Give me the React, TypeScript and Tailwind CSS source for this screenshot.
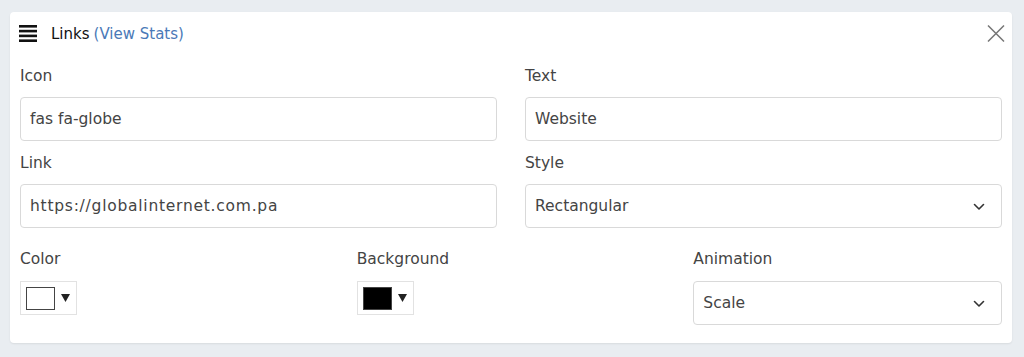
import React from "react";

const font = { fontFamily: '"DejaVu Sans", "Noto Sans", sans-serif' };

function Chevron() {
  return (
    <svg width="12" height="8" viewBox="0 0 12 8" fill="none" className="shrink-0">
      <path d="M1.5 1.5 L6 6 L10.5 1.5" stroke="#333" strokeWidth="1.6" strokeLinecap="round" strokeLinejoin="round" />
    </svg>
  );
}

function Field({ label, value, select, wide }: { label: string; value: string; select?: boolean; wide?: boolean }) {
  return (
    <div className="flex flex-col">
      <label className="text-[15.5px] leading-[22px] text-[#444] mb-[10px]">{label}</label>
      <div className="h-[44px] rounded-[4px] border border-[#d9d9d9] bg-white flex items-center justify-between pl-[9px] pr-[16px] pt-[2px] text-[15.5px] text-[#444]">
        <span className={wide ? "tracking-[0.75px]" : ""}>{value}</span>
        {select && <Chevron />}
      </div>
    </div>
  );
}

function Swatch({ label, color }: { label: string; color: string }) {
  return (
    <div className="flex flex-col">
      <label className="text-[15.5px] leading-[22px] text-[#444] mb-[11px]">{label}</label>
      <div className="w-[57px] h-[34px] border border-[#e2e2e2] bg-white flex items-center pl-[5px] gap-[6px]">
        <div className="w-[29px] h-[23px] border border-[#444]" style={{ background: color }} />
        <svg width="9" height="9" viewBox="0 0 9 9" className="mb-[2px]"><path d="M0 1 L9 1 L4.5 9 Z" fill="#222" /></svg>
      </div>
    </div>
  );
}

export default function App() {
  return (
    <div className="w-[1024px] h-[357px] bg-[#e9edf1] pt-[12px] pl-[10px]" style={font}>
      <div className="w-[1002px] h-[331px] bg-white rounded-[4px] shadow-[0_1px_2px_rgba(0,0,0,0.08)] px-[10px]">
        <div className="h-[43px] flex items-center justify-between">
          <div className="flex items-center">
            <svg width="18" height="17" viewBox="0 0 18 17" className="ml-[-1px] mr-[14px]">
              <rect x="0" y="0" width="18" height="2.6" fill="#111" />
              <rect x="0" y="4.8" width="18" height="2.6" fill="#111" />
              <rect x="0" y="9.6" width="18" height="2.6" fill="#111" />
              <rect x="0" y="14.4" width="18" height="2.6" fill="#111" />
            </svg>
            <span className="text-[15px] text-[#111] mt-[1px]">Links</span>
            <span className="text-[15px] text-[#4a79b7] ml-[4px] mt-[1px]">(View Stats)</span>
          </div>
          <svg width="18" height="17" viewBox="0 0 18 17" className="mr-[-3px]">
            <path d="M1 0.5 L17 16.5 M17 0.5 L1 16.5" stroke="#777" strokeWidth="1.5" />
          </svg>
        </div>
        <div className="grid grid-cols-2 gap-x-[28px] gap-y-[11px] mt-[10px]">
          <Field label="Icon" value="fas fa-globe" />
          <Field label="Text" value="Website" />
          <Field label="Link" value="https://globalinternet.com.pa" wide />
          <Field label="Style" value="Rectangular" select />
        </div>
        <div className="grid grid-cols-3 gap-x-[28px] mt-[20px]">
          <Swatch label="Color" color="#fff" />
          <Swatch label="Background" color="#000" />
          <div className="flex flex-col">
            <label className="text-[15.5px] leading-[22px] text-[#444] mb-[11px]">Animation</label>
            <div className="h-[44px] rounded-[4px] border border-[#d9d9d9] bg-white flex items-center justify-between pl-[9px] pr-[16px] pt-[2px] text-[15.5px] text-[#444]">
              <span>Scale</span>
              <Chevron />
            </div>
          </div>
        </div>
      </div>
    </div>
  );
}
